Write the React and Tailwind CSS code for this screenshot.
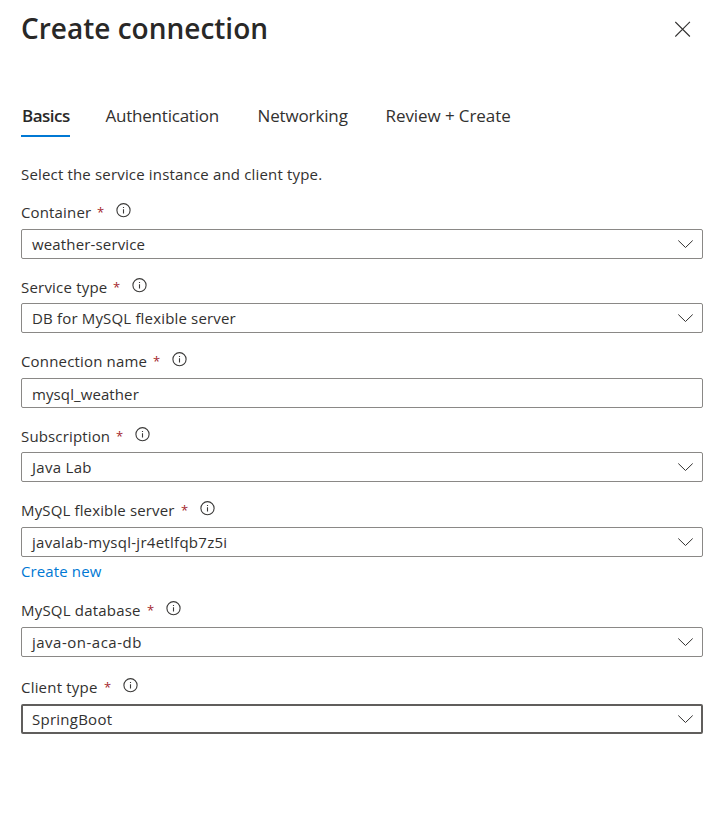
const TABS = [
  { name: "Basics", cls: "w-[49px] mr-[35.5px] pl-px font-semibold tracking-[-0.5px]", active: true },
  { name: "Authentication", cls: "w-[114px] mr-[38px] tracking-[-0.22px]" },
  { name: "Networking", cls: "w-[92px] mr-9 tracking-[-0.14px]" },
  { name: "Review + Create", cls: "tracking-[-0.08px]" },
];

const FIELDS = [
  { label: "Container", labelCls: "w-[70px] tracking-[0.15px]", value: "weather-service", valueCls: "tracking-[0.15px]", cls: "h-[59px] mb-4", select: true },
  { label: "Service type", labelCls: "w-[86px] tracking-[0.2px]", value: "DB for MySQL flexible server", valueCls: "tracking-[0.17px]", cls: "h-[58px] mb-4", select: true },
  { label: "Connection name", labelCls: "w-[126px] tracking-[0.17px]", value: "mysql_weather", valueCls: "pt-px tracking-[0.1px]", cls: "h-[59px] mb-4" },
  { label: "Subscription", labelCls: "w-[89px] tracking-[0.15px]", value: "Java Lab", valueCls: "tracking-[0.3px]", cls: "h-[58px] mb-4", select: true },
  { label: "MySQL flexible server", labelCls: "w-[154px] tracking-[0.14px]", value: "javalab-mysql-jr4etlfqb7z5i", valueCls: "tracking-[0.28px]", cls: "h-[59px]", select: true, create: true },
  { label: "MySQL database", labelCls: "w-[120px] tracking-[0.2px]", value: "java-on-aca-db", valueCls: "tracking-[0.5px]", cls: "h-[59px] mb-[18px]", select: true },
  { label: "Client type", labelCls: "w-[77px] tracking-[0.2px]", value: "SpringBoot", valueCls: "tracking-[0.25px]", cls: "h-[59px]", select: true, focused: true },
];

function InfoIcon() {
  return (
    <svg className="mt-[3px] h-[15px] w-[15px] shrink-0" viewBox="0 0 15 15" fill="none" aria-hidden="true">
      <circle cx="7.5" cy="7.2" r="6.6" stroke="#3b3a39" strokeWidth="1.1" />
      <path d="M7.5 6.2V10.5M7.5 4V5.1" stroke="#3b3a39" strokeWidth="1.1" />
    </svg>
  );
}

function Chevron() {
  return (
    <svg className="h-2 w-4 shrink-0" viewBox="0 0 16 8" fill="none" aria-hidden="true">
      <path d="M1.3 0.5L8.5 7.5L15.7 0.5" stroke="#323130" />
    </svg>
  );
}

function Field({ field }) {
  return (
    <>
      <div className={"flex flex-col justify-between " + field.cls}>
        <div className="flex h-6 items-start">
          <span className={"shrink-0 whitespace-nowrap leading-6 " + field.labelCls}>{field.label}</span>
          <span className="ml-1.5 w-[19px] shrink-0 text-[13px] leading-6 text-[#a4262c]">*</span>
          <InfoIcon />
        </div>
        <div
          className={
            "flex h-[30px] items-center justify-between rounded-xs bg-white " +
            (field.focused ? "border-2 border-[#605e5c] pl-[9px] pr-2" : "border border-[#8a8886] pl-2.5 pr-[9px]")
          }
        >
          <span className={"whitespace-nowrap leading-6 " + field.valueCls}>{field.value}</span>
          {field.select && <Chevron />}
        </div>
      </div>
      {field.create && (
        <div className="h-[41px] pt-[2px]">
          <a href="#" className="block leading-6 tracking-[0.12px] text-[#0078d4]">Create new</a>
        </div>
      )}
    </>
  );
}

export default function App() {
  return (
    <main className="h-[832px] w-[722px] overflow-hidden bg-white pl-[21px] pr-[19px] font-['Open_Sans','Noto_Sans',sans-serif] text-[15px] text-[#323130]">
      <header className="flex h-[100px] items-start justify-between">
        <h1 className="pt-[9px] text-[28px] leading-[38px] font-semibold text-[#292827]">Create connection</h1>
        <button aria-label="Close" className="mt-[21px] mr-3">
          <svg className="h-4 w-4" viewBox="0 0 16 16" fill="none">
            <path d="M0.3 0.9L14.9 15.5M14.9 0.9L0.3 15.5" stroke="#323130" strokeWidth="1.1" />
          </svg>
        </button>
      </header>
      <nav className="flex h-[37px] text-[17px] leading-8">
        {TABS.map((tab) => (
          <div key={tab.name} className={"h-full whitespace-nowrap " + tab.cls + (tab.active ? " border-b-2 border-[#0078d4] text-[#292827]" : "")}>
            {tab.name}
          </div>
        ))}
      </nav>
      <p className="mb-[14px] pt-[25px] leading-6 tracking-[0.17px]">Select the service instance and client type.</p>
      {FIELDS.map((field) => (
        <Field key={field.label} field={field} />
      ))}
    </main>
  );
}
